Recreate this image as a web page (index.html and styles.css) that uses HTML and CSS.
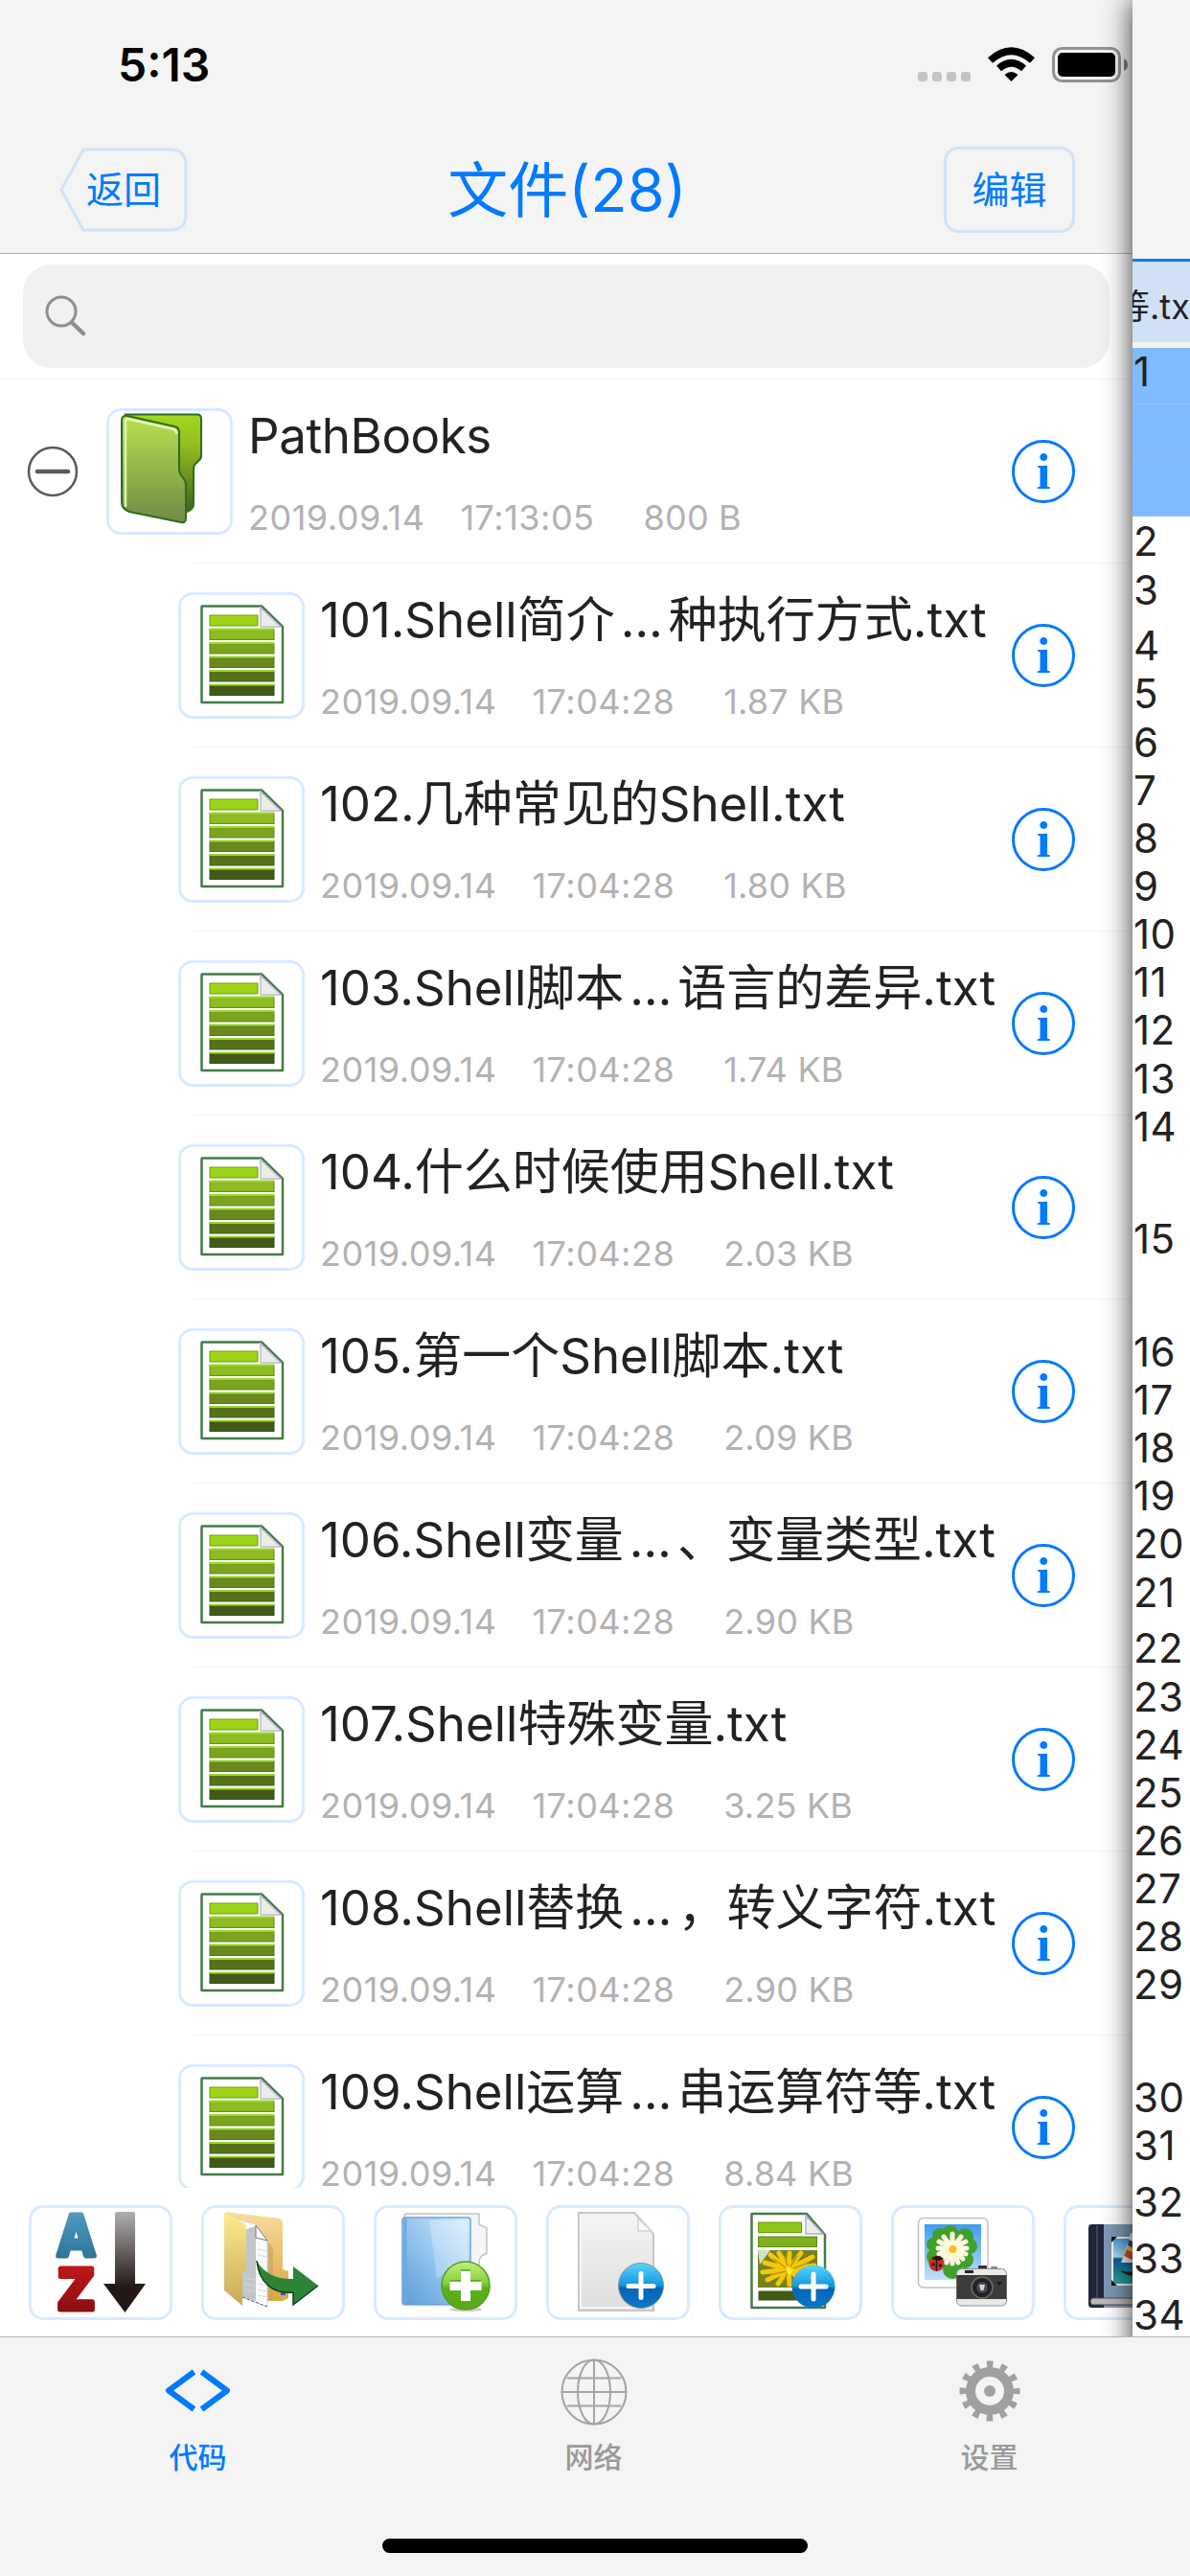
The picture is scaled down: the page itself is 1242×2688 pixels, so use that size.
FILE: index.html
```html
<!DOCTYPE html>
<html lang="zh-CN">

<head>
    <meta charset="UTF-8">
    <meta name="viewport" content="width=device-width, initial-scale=1.0">
    <title>文件</title>
    <link rel="stylesheet" href="styles.css">
</head>

<body>
    <!-- shared icons -->
    <svg class="defs" width="0" height="0">
        <defs>
            <linearGradient id="gFront" x1="0" y1="0" x2="0" y2="1">
                <stop offset="0" stop-color="#b7e04f" />
                <stop offset="1" stop-color="#6f8b45" />
            </linearGradient>
            <linearGradient id="gBack" x1="0" y1="0" x2="0" y2="1">
                <stop offset="0" stop-color="#a3d820" />
                <stop offset="0.3" stop-color="#93bf20" />
                <stop offset="1" stop-color="#45611a" />
            </linearGradient>
            <linearGradient id="gBlue" x1="0" y1="0" x2="0" y2="1">
                <stop offset="0" stop-color="#5ad6ff" />
                <stop offset="0.5" stop-color="#1494dc" />
                <stop offset="0.55" stop-color="#0564b8" />
                <stop offset="1" stop-color="#0a78c8" />
            </linearGradient>
            <linearGradient id="gGreen" x1="0" y1="0" x2="0" y2="1">
                <stop offset="0" stop-color="#c0f080" />
                <stop offset="0.45" stop-color="#86ce3c" />
                <stop offset="0.55" stop-color="#5fb01c" />
                <stop offset="1" stop-color="#58a818" />
            </linearGradient>
            <linearGradient id="gA" x1="0" y1="0" x2="0" y2="1">
                <stop offset="0" stop-color="#56a0c8" />
                <stop offset="1" stop-color="#256c8c" />
            </linearGradient>
            <linearGradient id="gZ" x1="0" y1="0" x2="0" y2="1">
                <stop offset="0" stop-color="#c8191c" />
                <stop offset="1" stop-color="#7d0c0e" />
            </linearGradient>
            <linearGradient id="gArrow" x1="0" y1="0" x2="0" y2="1">
                <stop offset="0" stop-color="#b0b0b0" />
                <stop offset="0.75" stop-color="#231815" />
            </linearGradient>
            <linearGradient id="gYellow" x1="0" y1="0" x2="0" y2="1">
                <stop offset="0" stop-color="#fdec8c" />
                <stop offset="1" stop-color="#c9a75a" />
            </linearGradient>
            <linearGradient id="gTan" x1="0" y1="0" x2="0" y2="1">
                <stop offset="0" stop-color="#f9dc9c" />
                <stop offset="1" stop-color="#d9a645" />
            </linearGradient>
            <linearGradient id="gBook" x1="1" y1="0" x2="0" y2="1">
                <stop offset="0" stop-color="#d9effb" />
                <stop offset="0.45" stop-color="#9cc9ef" />
                <stop offset="1" stop-color="#5b9bd8" />
            </linearGradient>
            <linearGradient id="gPage" x1="0" y1="0" x2="0" y2="1">
                <stop offset="0" stop-color="#f4f4f4" />
                <stop offset="1" stop-color="#dedede" />
            </linearGradient>
            <linearGradient id="gSky" x1="0" y1="0" x2="0" y2="1">
                <stop offset="0" stop-color="#3f9bf2" />
                <stop offset="1" stop-color="#c2e0fa" />
            </linearGradient>
            <linearGradient id="gSea" x1="0" y1="0" x2="0" y2="1">
                <stop offset="0" stop-color="#3fa0e0" />
                <stop offset="0.4" stop-color="#b8dcec" />
                <stop offset="0.45" stop-color="#0e5f9a" />
                <stop offset="1" stop-color="#2aa89c" />
            </linearGradient>
        </defs>

        <symbol id="folder" viewBox="3 3 126 126">
            <path d="M20 6.500H95Q99 6.500 99 11V50Q99 53 96 55L93 58Q91 60 91 63V101Q91 105 84 108L60 100Z" fill="url(#gBack)" stroke="#2f6b22" stroke-width="2" />
            <path d="M22 8L71 19Q76 20 76 25V64Q76 67 78 70L81 74Q83 77 83 80V115Q83 120 78 119L24 108Q16 105 16 98V13Q16 7 22 8Z" fill="url(#gFront)" stroke="#2f6b22" stroke-width="2" />
            <path d="M20 103V14Q20 10.500 24 11.500L69 21.500Q73 22.500 73.500 27" fill="none" stroke="#e6f7b8" stroke-width="2.500" />
        </symbol>

        <symbol id="txt" viewBox="3 3 126 126">
            <path d="M25 14.500H87L109 36V115H24.500V15Z" fill="#fff" stroke="#47794a" stroke-width="2.500" stroke-linejoin="round" />
            <path d="M86 16V36H107Z" fill="#ececf0" stroke="#bdbdc6" stroke-width="1.500" />
            <g stroke-width="1">
                <rect x="33" y="24" width="50" height="11" fill="#9cd419" stroke="#6f9c10" />
                <rect x="33" y="38.500" width="67" height="11" fill="#8cbb22" stroke="#5f9010" />
                <rect x="33" y="53" width="67" height="11" fill="#7ba320" stroke="#5c8410" />
                <rect x="33" y="67.500" width="67" height="11" fill="#6a8a20" stroke="#4f7410" />
                <rect x="33" y="82" width="67" height="11" fill="#54711b" stroke="#3c6008" />
                <rect x="33" y="96.500" width="67" height="11" fill="#42591a" stroke="#345008" />
            </g>
            <path d="M33 38.500H100M33 53H100M33 67.500H100M33 82H100M33 96.500H100" stroke="#9ed82c" stroke-width="2" />
        </symbol>

        <symbol id="info" viewBox="0 0 66 66">
            <circle cx="33" cy="33" r="31.500" fill="none" stroke="#007aff" stroke-width="3" />
            <text x="33" y="51" class="info-i">i</text>
        </symbol>
    </svg>

    <div class="main">
        <div class="browser">
            <div class="status-bar">
                <span class="time">5:13</span>
                <svg class="status-icons" width="220" height="40" viewBox="957 48 220 40">
                    <g fill="#c4c4c4">
                        <rect x="958" y="75" width="10" height="10" rx="3" />
                        <rect x="973" y="75" width="10" height="10" rx="3" />
                        <rect x="988" y="75" width="10" height="10" rx="3" />
                        <rect x="1003" y="75" width="10" height="10" rx="3" />
                    </g>
                    <g fill="none" stroke="#000" stroke-width="7.500">
                        <path d="M1033.500 63Q1055.500 43.500 1077.500 63" />
                        <path d="M1042.500 71.500Q1055.500 60 1068.500 71.500" />
                    </g>
                    <path d="M1048.500 78Q1055.500 72 1062.500 78L1055.500 85Z" />
                    <rect x="1099.500" y="50.500" width="69" height="34" rx="9" fill="none" stroke="#929292" stroke-width="3" />
                    <rect x="1104" y="55" width="60" height="25" rx="5" />
                    <path d="M1173 61Q1177 63 1177 67.500Q1177 72 1173 74Z" fill="#808080" />
                </svg>
            </div>

            <div class="nav">
                <a class="btn-back">
                    <svg width="134" height="88" viewBox="0 0 134 88">
                        <path d="M25 2H116Q132 2 132 18V70Q132 86 116 86H25L2 44Z" fill="none" stroke="#d0e3f8" stroke-width="3" />
                    </svg>
                    <span>返回</span>
                </a>
                <div class="title">文件(28)</div>
                <a class="btn-edit">编辑</a>
            </div>

            <div class="search">
                <div class="search-field">
                    <svg width="44" height="44" viewBox="0 0 44 44" fill="none" stroke="#8e8e93">
                        <circle cx="17" cy="17" r="15" stroke-width="3" />
                        <path d="M28 28.500L40 40" stroke-width="4.500" stroke-linecap="round" />
                    </svg>
                </div>
            </div>

            <div class="list">
                <div class="row folder">
                    <svg class="collapse" width="54" height="54" viewBox="0 0 54 54">
                        <circle cx="27" cy="27" r="25" fill="none" stroke="#5a5a5a" stroke-width="2.500" />
                        <path d="M11 27H43" stroke="#5a5a5a" stroke-width="4.500" stroke-linecap="round" />
                    </svg>
                    <div class="thumb"><svg><use href="#folder" /></svg></div>
                    <div class="text">
                        <div class="name">PathBooks</div>
                        <div class="meta"><span>2019.09.14</span><span>17:13:05</span><span>800 B</span></div>
                    </div>
                    <svg class="info"><use href="#info" /></svg>
                </div>
                <div class="row">
                    <div class="thumb"><svg><use href="#txt" /></svg></div>
                    <div class="text">
                        <div class="name">101.Shell简介<span class="dots">…</span>种执行方式.txt</div>
                        <div class="meta"><span>2019.09.14</span><span>17:04:28</span><span>1.87 KB</span></div>
                    </div>
                    <svg class="info"><use href="#info" /></svg>
                </div>
                <div class="row">
                    <div class="thumb"><svg><use href="#txt" /></svg></div>
                    <div class="text">
                        <div class="name">102.几种常见的Shell.txt</div>
                        <div class="meta"><span>2019.09.14</span><span>17:04:28</span><span>1.80 KB</span></div>
                    </div>
                    <svg class="info"><use href="#info" /></svg>
                </div>
                <div class="row">
                    <div class="thumb"><svg><use href="#txt" /></svg></div>
                    <div class="text">
                        <div class="name">103.Shell脚本<span class="dots">…</span>语言的差异.txt</div>
                        <div class="meta"><span>2019.09.14</span><span>17:04:28</span><span>1.74 KB</span></div>
                    </div>
                    <svg class="info"><use href="#info" /></svg>
                </div>
                <div class="row">
                    <div class="thumb"><svg><use href="#txt" /></svg></div>
                    <div class="text">
                        <div class="name">104.什么时候使用Shell.txt</div>
                        <div class="meta"><span>2019.09.14</span><span>17:04:28</span><span>2.03 KB</span></div>
                    </div>
                    <svg class="info"><use href="#info" /></svg>
                </div>
                <div class="row">
                    <div class="thumb"><svg><use href="#txt" /></svg></div>
                    <div class="text">
                        <div class="name">105.第一个Shell脚本.txt</div>
                        <div class="meta"><span>2019.09.14</span><span>17:04:28</span><span>2.09 KB</span></div>
                    </div>
                    <svg class="info"><use href="#info" /></svg>
                </div>
                <div class="row">
                    <div class="thumb"><svg><use href="#txt" /></svg></div>
                    <div class="text">
                        <div class="name">106.Shell变量<span class="dots">…</span>、变量类型.txt</div>
                        <div class="meta"><span>2019.09.14</span><span>17:04:28</span><span>2.90 KB</span></div>
                    </div>
                    <svg class="info"><use href="#info" /></svg>
                </div>
                <div class="row">
                    <div class="thumb"><svg><use href="#txt" /></svg></div>
                    <div class="text">
                        <div class="name">107.Shell特殊变量.txt</div>
                        <div class="meta"><span>2019.09.14</span><span>17:04:28</span><span>3.25 KB</span></div>
                    </div>
                    <svg class="info"><use href="#info" /></svg>
                </div>
                <div class="row">
                    <div class="thumb"><svg><use href="#txt" /></svg></div>
                    <div class="text">
                        <div class="name">108.Shell替换<span class="dots">…</span>，转义字符.txt</div>
                        <div class="meta"><span>2019.09.14</span><span>17:04:28</span><span>2.90 KB</span></div>
                    </div>
                    <svg class="info"><use href="#info" /></svg>
                </div>
                <div class="row">
                    <div class="thumb"><svg><use href="#txt" /></svg></div>
                    <div class="text">
                        <div class="name">109.Shell运算<span class="dots">…</span>串运算符等.txt</div>
                        <div class="meta"><span>2019.09.14</span><span>17:04:28</span><span>8.84 KB</span></div>
                    </div>
                    <svg class="info"><use href="#info" /></svg>
                </div>
            </div>

            <div class="toolbar">
                <!-- sort -->
                <a class="tool">
                    <svg viewBox="3 3 144 114">
                        <text x="30" y="53" class="sort-letter" textLength="39" lengthAdjust="spacingAndGlyphs" fill="url(#gA)" stroke="url(#gA)">A</text>
                        <text x="30" y="109" class="sort-letter" textLength="39" lengthAdjust="spacingAndGlyphs" fill="url(#gZ)" stroke="url(#gZ)">Z</text>
                        <path d="M90 9Q90 7 92 7H109Q111 7 111 9V82H122L100.500 112L78 82H90Z" fill="url(#gArrow)" />
                    </svg>
                </a>
                <!-- move -->
                <a class="tool">
                    <svg viewBox="3 3 144 114">
                        <path d="M25 7L82 14Q85 15 85 18V67L91 69V97L85 100H69L50 60Z" fill="url(#gTan)" />
                        <path d="M69 37L75 45V100H69Z" fill="#c9a260" opacity="0.6" />
                        <path d="M30 13L57 20L69 37V106L43 96V30Z" fill="#fbfbfd" stroke="#d5d5da" stroke-width="1" />
                        <path d="M47 25L57 22V100L43 96V68L47 66Z" fill="#c4c6ca" />
                        <path d="M57 21V34L69 37Z" fill="#fff" stroke="#777" stroke-width="1" />
                        <path d="M59 46L68 48M59 52L68 54M59 82L68 84M59 88L68 90M59 94L68 96M45 76L56 78M45 82L56 84M45 88L56 90" stroke="#ccdcea" stroke-width="1" />
                        <path d="M43 96L69 106" stroke="#555" stroke-width="1" stroke-dasharray="3 2" />
                        <path d="M24 8L45 19Q47 20 47 23V67L43 71V105L24 89Z" fill="url(#gYellow)" />
                        <path d="M83 91h5v3h-5z" fill="#2a5dc8" />
                        <path d="M58 58C66 73 82 78 96 77V64L122 84L96 104V91C75 93 60 81 58 58Z" fill="#2c8437" />
                        <path d="M122 84L96 104V91C75 93 60 81 58 58" fill="none" stroke="#14401b" stroke-width="1.500" />
                    </svg>
                </a>
                <!-- new folder -->
                <a class="tool">
                    <svg viewBox="3 3 144 114">
                        <path d="M32 12Q32 9 35 9H110V18Q110 21 113 21.500L118 24V50L113 53Q110 55 110 60V80H40Z" fill="#f5f5f5" stroke="#c4c4c4" stroke-width="1.500" />
                        <rect x="30" y="13" width="71" height="91" rx="3" fill="url(#gBook)" stroke="#6ea5da" stroke-width="1.500" />
                        <path d="M58 16H98V58L66 76Z" fill="#fff" opacity="0.25" />
                        <path d="M33 14V102" stroke="#6fa9e2" stroke-width="3" />
                        <ellipse cx="96" cy="109" rx="17" ry="2" fill="#ccc" />
                        <circle cx="96" cy="84" r="25" fill="url(#gGreen)" stroke="#4fa01a" stroke-width="1.500" />
                        <path d="M91 68H101V79H112.500V89H101V100H91V89H79.500V79H91Z" fill="#fff" />
                        <path d="M91 68H101M79.500 79H91M101 79H112" stroke="#4f9a20" stroke-width="1.500" />
                    </svg>
                </a>
                <!-- new file -->
                <a class="tool">
                    <svg viewBox="3 3 144 114">
                        <path d="M34 8H92L112 30V110H34Z" fill="url(#gPage)" stroke="#c6c6c6" stroke-width="2" />
                        <path d="M36 10V107H110" fill="none" stroke="#fff" stroke-width="1.500" />
                        <path d="M96 14V27H110Z" fill="#fafafa" stroke="#d2d2d2" stroke-width="1.500" />
                        <circle cx="99" cy="84" r="23.500" fill="url(#gBlue)" stroke="#8a8f96" stroke-width="1" />
                        <path d="M99 71.500V96.500M86 84.500H112" stroke="#fff" stroke-width="5" stroke-linecap="round" />
                    </svg>
                </a>
                <!-- new picture file -->
                <a class="tool">
                    <svg viewBox="3 3 144 114">
                        <path d="M35 9H92L111 31V107H34.500V9.500Z" fill="#fff" stroke="#47794a" stroke-width="2.500" stroke-linejoin="round" />
                        <path d="M91 11V30H109Z" fill="#ececf0" stroke="#b0b0ba" stroke-width="1.500" />
                        <rect x="41.500" y="18" width="45" height="10.500" fill="#8cc91b" stroke="#6c9c10" />
                        <rect x="41.500" y="33" width="61" height="10.500" fill="#7fb01d" stroke="#5c8c10" />
                        <rect x="41" y="47" width="62" height="39" fill="#76821c" />
                        <path d="M41 47H54L43 62Z" fill="#cfe0c8" />
                        <path d="M94 86L103 66V86Z" fill="#456017" />
                        <g stroke="#f4c80c" stroke-width="5" stroke-linecap="round">
                            <path d="M73 67L54 52M73 67L63 50M73 67L74 50M73 67L86 50M73 67L98 54M73 67L100 63M73 67L48 60M73 67L46 70M73 67L51 78M73 67L62 82M73 67L74 83M73 67L88 80M73 67L97 74" />
                        </g>
                        <path d="M71 66L57 56M72 64L69 53M75 64L82 53M70 69L54 73M72 71L67 80M78 66L94 60" stroke="#c39508" stroke-width="1.500" />
                        <path d="M70 63L78 68L73 74Z" fill="#fdf03a" />
                        <rect x="41.500" y="89.500" width="61" height="10" fill="#3f5a12" />
                        <circle cx="99" cy="85" r="22.500" fill="url(#gBlue)" />
                        <path d="M99 72V98M86 85H112" stroke="#fff" stroke-width="5" stroke-linecap="round" />
                    </svg>
                </a>
                <!-- photo / camera -->
                <a class="tool">
                    <svg viewBox="3 3 144 114">
                        <rect x="28.500" y="13.500" width="72.500" height="72.500" rx="5" fill="#fcfcfc" stroke="#c2c2c2" stroke-width="1.500" />
                        <rect x="35" y="20" width="59" height="58" fill="url(#gSky)" />
                        <g fill="#3fa02c">
                            <circle cx="62" cy="30" r="9" />
                            <circle cx="51" cy="32" r="8" />
                            <circle cx="77" cy="33" r="9" />
                            <circle cx="82" cy="43" r="8" />
                            <circle cx="77" cy="57" r="9" />
                            <circle cx="64" cy="67" r="10" />
                            <circle cx="46" cy="54" r="9" />
                            <circle cx="44" cy="41" r="7" />
                        </g>
                        <g stroke="#fbf7da" stroke-width="5" stroke-linecap="round">
                            <path d="M64 45V30M64 45V61M64 45H49M64 45H79M64 45L55 33M64 45L73 33M64 45L53 56M64 45L75 56M64 45L50 38M64 45L78 38M64 45L58 60M64 45L70 60M64 45L50 51M64 45L78 51" />
                        </g>
                        <circle cx="64.500" cy="46" r="4" fill="#f6c21c" />
                        <circle cx="47.500" cy="61" r="8" fill="#d22d1c" />
                        <path d="M42 56Q48 50 55 56L50 58Z" fill="#1c1c1c" />
                        <path d="M47.500 54V69" stroke="#1c1c1c" stroke-width="1.500" />
                        <circle cx="44" cy="62" r="1.800" fill="#1c1c1c" />
                        <circle cx="51.500" cy="63" r="1.800" fill="#1c1c1c" />
                        <rect x="91" y="63" width="9" height="5" rx="1" fill="#333" />
                        <rect x="104" y="64" width="7" height="4" rx="1" fill="#888" />
                        <rect x="68.500" y="66.500" width="52" height="38.500" rx="5" fill="#e9e9e9" stroke="#8c8c8c" stroke-width="1" />
                        <rect x="68.500" y="73" width="52" height="25" fill="#3c3c3c" />
                        <rect x="77" y="68" width="9" height="3" fill="#222" />
                        <circle cx="95" cy="86" r="11" fill="#262626" stroke="#6c6c6c" stroke-width="1.500" />
                        <circle cx="95" cy="86" r="6.500" fill="#4a4a52" stroke="#111" stroke-width="1" />
                        <path d="M92 83H98L96.500 89H93.500Z" fill="#d9d4ea" />
                        <path d="M110 80H116L113 84Z" fill="#1a1a1a" />
                    </svg>
                </a>
                <!-- album -->
                <a class="tool">
                    <svg viewBox="3 3 144 114">
                        <rect x="26" y="20" width="90" height="87" rx="4" fill="#7d99b6" />
                        <path d="M30 20H42V107H30Q26 107 26 103V24Q26 20 30 20Z" fill="#20263a" />
                        <path d="M35 21V98" stroke="#3b435c" stroke-width="2" />
                        <path d="M31 97H116V104H31Q28 104 28 100.500Q28 97 31 97Z" fill="#b9b9b9" stroke="#4a4a4a" stroke-width="1" />
                        <rect x="50" y="33" width="60" height="51" fill="#f6f6f6" />
                        <rect x="52" y="35" width="56" height="47" fill="url(#gSea)" />
                        <path d="M50 33H56L50 39ZM50 84V78L56 84Z" fill="#161616" />
                        <path d="M70 29Q66 45 60 60H78V29Z" fill="#eef2f7" />
                        <path d="M66 46L78 52V60L63 53Z" fill="#e2502a" />
                        <path d="M67 42L78 47V52L66 46Z" fill="#f4c32c" />
                        <path d="M68 36L78 41V47L67 42Z" fill="#3b3f96" />
                        <path d="M59 68Q66 71 78 69V74Q64 74 59 68Z" fill="#222" />
                    </svg>
                </a>
            </div>
        </div>

        <!-- editor pane, mostly off screen -->
        <div class="editor">
            <div class="tab"><span>等.txt</span></div>
            <ol class="lines">
                <li class="current"><span>1</span><i></i><i></i></li>
                <li>2</li>
                <li class="tall">3</li>
                <li>4</li>
                <li>5</li>
                <li>6</li>
                <li>7</li>
                <li>8</li>
                <li>9</li>
                <li>10</li>
                <li>11</li>
                <li>12</li>
                <li>13</li>
                <li class="wrap">14</li>
                <li class="wrap">15</li>
                <li>16</li>
                <li>17</li>
                <li>18</li>
                <li>19</li>
                <li>20</li>
                <li class="tall">21</li>
                <li>22</li>
                <li>23</li>
                <li>24</li>
                <li>25</li>
                <li>26</li>
                <li>27</li>
                <li>28</li>
                <li class="wrap">29</li>
                <li>30</li>
                <li class="tall">31</li>
                <li class="tall">32</li>
                <li class="tall">33</li>
                <li class="tall">34</li>
            </ol>
        </div>
    </div>

    <div class="tab-bar">
        <div class="tabs">
            <a class="active">
                <svg width="72" height="72" viewBox="0 0 72 72" fill="none" stroke="#007aff" stroke-width="6" stroke-linejoin="round">
                    <path d="M31.500 16L5 35.500L31.500 55M39.500 16L66 35.500L39.500 55" />
                </svg>
                <span>代码</span>
            </a>
            <a>
                <svg width="72" height="72" viewBox="0 0 72 72" fill="none" stroke="#a3a3a3" stroke-width="2">
                    <circle cx="36" cy="37" r="33.500" />
                    <ellipse cx="36" cy="37" rx="17" ry="33.500" />
                    <path d="M36 4V70M3 37H69M8 22.500H64M8 51.500H64" />
                </svg>
                <span>网络</span>
            </a>
            <a>
                <svg width="72" height="72" viewBox="0 0 72 72" fill="none" stroke="#a0a0a0">
                    <circle cx="36" cy="36" r="20" stroke-width="10" />
                    <circle cx="36" cy="36" r="28" stroke-width="7" stroke-dasharray="6.500 8.160" stroke-dashoffset="3.250" />
                    <circle cx="36" cy="36" r="6" fill="#a0a0a0" stroke="none" />
                </svg>
                <span>设置</span>
            </a>
        </div>
        <div class="home-indicator"></div>
    </div>
</body>

</html>
```
FILE: styles.css
```css
* {
    box-sizing: border-box;
}

body {
    margin: 0;
    padding: 0;
    width: 1242px;
    height: 2688px;
    overflow: hidden;
    display: flex;
    flex-direction: column;
    font-family: Inter, 'Noto Sans CJK SC', sans-serif;
    color: #222222;
    background: #ffffff;
}

svg {
    display: block;
    flex-shrink: 0;
}

.defs {
    position: absolute;
}

.main {
    display: flex;
    height: 2438px;
}

/* file browser */

.browser {
    width: 1182px;
    height: 2438px;
    display: flex;
    flex-direction: column;
    overflow: hidden;
}

.status-bar {
    height: 132px;
    padding: 36px 5px 0 123px;
    display: flex;
    justify-content: space-between;
    background: #f4f4f4;
}

.time {
    font-size: 48px;
    font-weight: 600;
    line-height: 64px;
    color: #000000;
}

.status-icons {
    margin-top: 12px;
}

.nav {
    height: 133px;
    padding: 0 60px 1px 62px;
    display: grid;
    grid-template-columns: 1fr auto 1fr;
    align-items: center;
    background: #f4f4f4;
    border-bottom: 1px solid #b2b2b2;
    color: #007aff;
}

.btn-back {
    display: grid;
    align-items: center;
    font-size: 39px;
}

.btn-back svg,
.btn-back span {
    grid-area: 1 / 1;
}

.btn-back span {
    padding-left: 28px;
    line-height: 88px;
}

.title {
    font-size: 63px;
    line-height: 80px;
}

.btn-edit {
    justify-self: end;
    width: 137px;
    height: 90px;
    border: 3px solid #d0e3f8;
    border-radius: 15px;
    font-size: 39px;
    line-height: 84px;
    text-align: center;
}

.search {
    height: 131px;
    padding: 11px 24px;
    border-bottom: 1px solid #f4f4f4;
}

.search-field {
    height: 108px;
    padding: 32px 23px;
    border-radius: 30px;
    background: #f1f1f1;
}

.list {
    height: 1887px;
    overflow: hidden;
}

.row {
    display: flex;
    align-items: center;
    height: 192px;
    padding: 0 60px 0 186px;
    background: linear-gradient(#f4f4f4, #f4f4f4) no-repeat 202px 100% / 100% 1px;
}

.row.folder {
    padding-left: 28px;
}

.collapse {
    margin-right: 29px;
}

.thumb {
    width: 132px;
    height: 132px;
    flex-shrink: 0;
    border: 3px solid #d8eaff;
    border-radius: 15px;
}

.thumb svg {
    width: 126px;
    height: 126px;
}

.text {
    flex: 1;
    padding-left: 16px;
    white-space: nowrap;
}

.name {
    font-size: 51px;
    line-height: 66px;
}

.folder .name {
    letter-spacing: -0.4px;
}

.name .dots {
    padding: 0 6px;
}

.meta {
    display: flex;
    margin-top: 30px;
    font-size: 36px;
    line-height: 44px;
    letter-spacing: 0.5px;
    color: #b2b2b2;
}

.meta span:nth-child(2) {
    margin-left: 37px;
}

.meta span:nth-child(3) {
    margin-left: 51px;
    letter-spacing: 0.2px;
}

.info {
    width: 66px;
    height: 66px;
}

.info-i {
    font-family: 'Liberation Serif', serif;
    font-size: 53px;
    font-weight: bold;
    text-anchor: middle;
    fill: #007aff;
}

.toolbar {
    display: flex;
    gap: 30px;
    padding: 18px 0 17px 30px;
}

.tool {
    width: 150px;
    height: 120px;
    flex-shrink: 0;
    border: 3px solid #d8eaff;
    border-radius: 15px;
}

.tool svg {
    width: 144px;
    height: 114px;
}

.sort-letter {
    font-family: 'DejaVu Sans', sans-serif;
    font-size: 58px;
    font-weight: bold;
    stroke-width: 5px;
    stroke-linejoin: round;
}

/* editor */

.editor {
    position: relative;
    width: 60px;
    height: 2688px;
    padding-top: 270px;
    background: #f4f4f4;
    box-shadow: 0 0 30px rgba(0, 0, 0, 0.8);
}

.tab {
    height: 87px;
    display: flex;
    overflow: hidden;
    border-top: 3px solid #007aff;
    background: #d0e1f6;
    font-size: 36px;
    line-height: 94px;
}

.tab span {
    margin-left: -18px;
}

.lines {
    list-style: none;
    margin: 6px 0 0;
    padding: 0;
    background: #ffffff;
    font-size: 42px;
    line-height: 50px;
    letter-spacing: 0.5px;
}

.lines li {
    height: 50.150px;
    padding: 1px 0 0 1px;
}

.lines .tall {
    height: 58.800px;
}

.lines .wrap {
    height: 117.600px;
}

.lines .current {
    height: 176.400px;
    padding-top: 0;
    background: #80bbff;
}

.current span,
.current i {
    display: block;
    height: 58.800px;
    margin-left: -1px;
    padding-left: 1px;
    border-bottom: 1px solid #8fc3ff;
}

/* bottom tabs */

.tab-bar {
    position: relative;
    height: 250px;
    border-top: 1px solid #b2b2b2;
    background: #f4f4f4;
}

.tabs {
    display: flex;
    padding-top: 20px;
}

.tabs a {
    width: 413px;
    display: flex;
    flex-direction: column;
    align-items: center;
    font-size: 30px;
    font-weight: 500;
    line-height: 40px;
    color: #999999;
}

.tabs .active {
    color: #007aff;
}

.tabs span {
    margin-top: 13px;
}

.home-indicator {
    width: 444px;
    height: 15px;
    margin: 65px auto 0;
    border-radius: 8px;
    background: #000000;
}
```
